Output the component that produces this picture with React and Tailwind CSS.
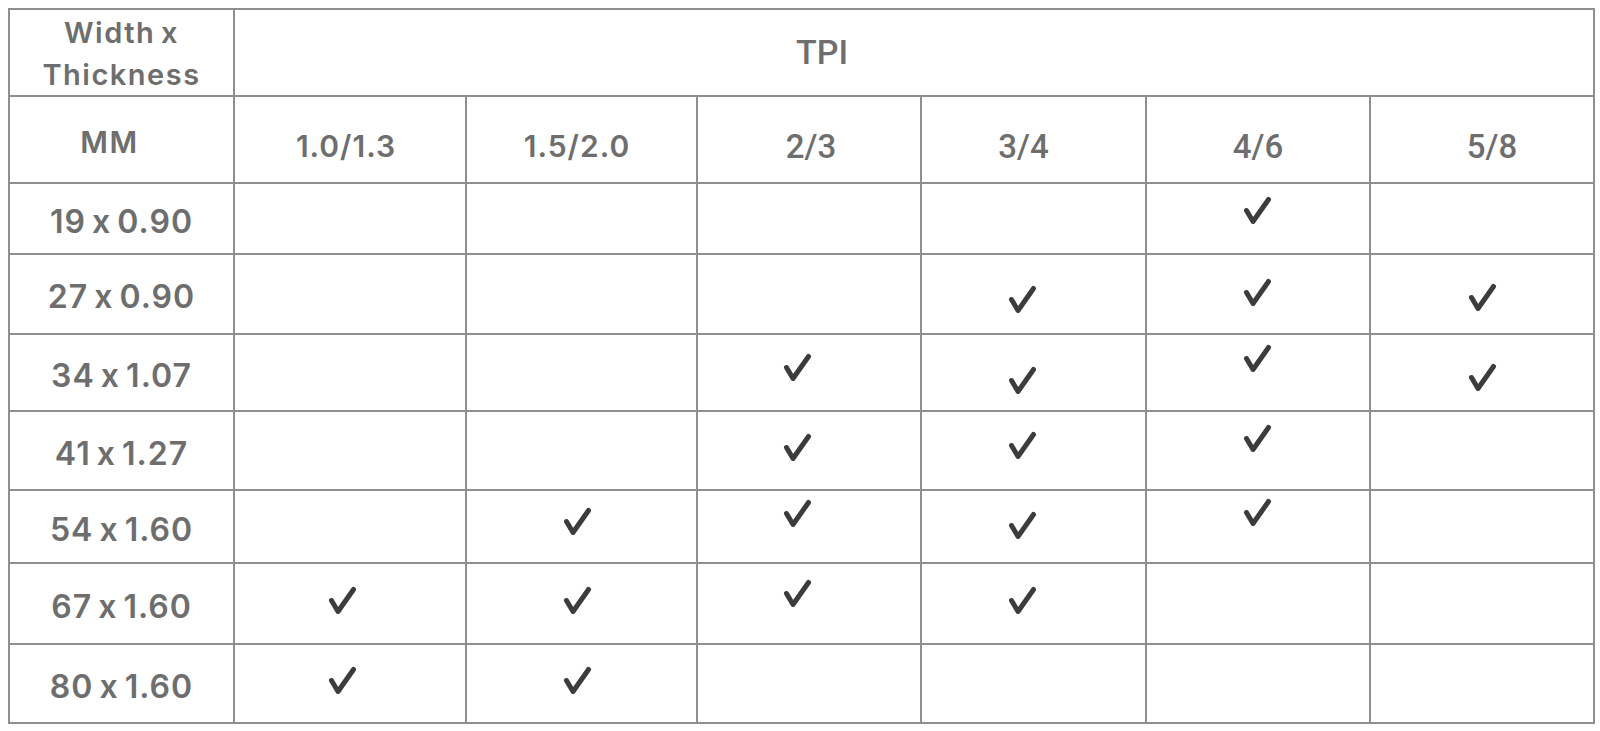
import React from "react";

const cols = [
  { head: "1.0/1.3", headCls: "pr-[8px] font-['Inter',sans-serif] text-[30px] font-semibold tracking-[1px]", chk: "pr-[16px]" },
  { head: "1.5/2.0", headCls: "pr-[9px] font-['Inter',sans-serif] text-[30px] font-semibold tracking-[1px]", chk: "pr-[9px]" },
  { head: "2/3", headCls: "pl-[4px] font-['Roboto',sans-serif] text-[33px] font-medium", chk: "pr-[24px]" },
  { head: "3/4", headCls: "pr-[20px] font-['Roboto',sans-serif] text-[33px] font-medium", chk: "pr-[23px]" },
  { head: "4/6", headCls: "font-['Roboto',sans-serif] text-[33px] font-medium", chk: "pr-[2px]" },
  { head: "5/8", headCls: "pl-[20px] font-['Roboto',sans-serif] text-[33px] font-medium", chk: "" },
];

const rows = [
  { label: "19 x 0.90", checks: { 4: "mt-[12px]" } },
  { label: "27 x 0.90", checks: { 3: "mt-[30px]", 4: "mt-[23px]", 5: "mt-[28px]" } },
  { label: "34 x 1.07", checks: { 2: "mt-[18px]", 3: "mt-[31px]", 4: "mt-[9px]", 5: "mt-[28px]" } },
  { label: "41 x 1.27", checks: { 2: "mt-[21px]", 3: "mt-[19px]", 4: "mt-[12px]" } },
  { label: "54 x 1.60", checks: { 1: "mt-[16px]", 2: "mt-[8px]", 3: "mt-[20px]", 4: "mt-[7px]" } },
  { label: "67 x 1.60", checks: { 0: "mt-[22px]", 1: "mt-[22px]", 2: "mt-[15px]", 3: "mt-[22px]" } },
  { label: "80 x 1.60", checks: { 0: "mt-[21px]", 1: "mt-[21px]" } },
];

function Check() {
  return (
    <svg width="30" height="30" viewBox="0 0 30 30" fill="none">
      <path
        d="M4.5 14.5 L11 25.5 L26.5 3.5"
        stroke="#3c3c3c"
        strokeWidth="5"
        strokeLinecap="round"
        strokeLinejoin="round"
      />
    </svg>
  );
}

export default function App() {
  return (
    <div className="min-h-screen bg-white p-[8px] text-[#6e6e6e] [font-feature-settings:'calt'_0]">
      <div className="inline-grid grid-cols-[223px_230px_229px_222px_223px_222px_222px] grid-rows-[85px_85px_69px_78px_75px_77px_71px_79px_77px] gap-[2px] bg-[#8f8f8f] p-[2px]">
        {/* header row 1 */}
        <div className="flex flex-col items-center justify-center bg-white pt-[2px] font-['Inter',sans-serif] text-[29px] font-semibold leading-[42px] tracking-[1.5px] [word-spacing:-3px]">
          <span>Width x</span>
          <span>Thickness</span>
        </div>
        <div className="col-span-6 flex items-center justify-center bg-white pr-[184px] font-['Roboto',sans-serif] text-[34px] font-medium">
          TPI
        </div>

        {/* header row 2 */}
        <div className="flex items-center justify-center bg-white pt-[6px] pr-[24px] font-['Inter',sans-serif] text-[30px] font-semibold tracking-[1.5px]">
          MM
        </div>
        {cols.map((c) => (
          <div key={c.head} className={"flex items-center justify-center bg-white pt-[14px] " + c.headCls}>
            {c.head}
          </div>
        ))}

        {/* data rows */}
        {rows.map((r) => (
          <React.Fragment key={r.label}>
            <div className="flex items-center justify-center bg-white pt-[6px] font-['Inter',sans-serif] text-[32px] font-semibold tracking-[1px] [word-spacing:-3px]">
              {r.label}
            </div>
            {cols.map((c, i) => (
              <div key={c.head} className={"flex items-start justify-center bg-white " + c.chk}>
                {r.checks[i] ? (
                  <div className={r.checks[i]}>
                    <Check />
                  </div>
                ) : null}
              </div>
            ))}
          </React.Fragment>
        ))}
      </div>
    </div>
  );
}
